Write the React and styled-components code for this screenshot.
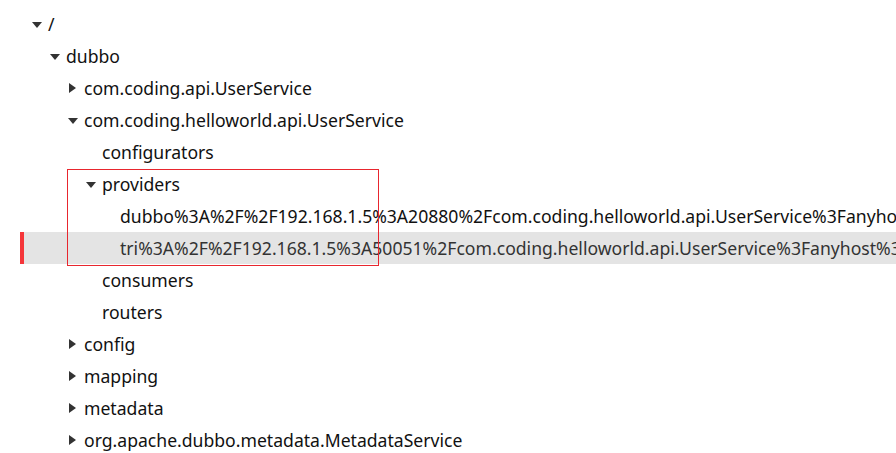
import styled, { createGlobalStyle } from "styled-components";

const GlobalStyle = createGlobalStyle`
  html, body {
    margin: 0;
    padding: 0;
    background: #ffffff;
  }
  body {
    font-family: "Noto Sans", "Open Sans", "Liberation Sans", sans-serif;
    overflow: hidden;
  }
`;

const tree = [
  { label: "/", open: true, children: [
    { label: "dubbo", open: true, children: [
      { label: "com.coding.api.UserService", children: [] },
      { label: "com.coding.helloworld.api.UserService", open: true, children: [
        { label: "configurators" },
        { label: "providers", open: true, children: [
          { label: "dubbo%3A%2F%2F192.168.1.5%3A20880%2Fcom.coding.helloworld.api.UserService%3Fanyhost%3Dtrue" },
          { label: "tri%3A%2F%2F192.168.1.5%3A50051%2Fcom.coding.helloworld.api.UserService%3Fanyhost%3Dtrue", selected: true },
        ] },
        { label: "consumers" },
        { label: "routers" },
      ] },
      { label: "config", children: [] },
      { label: "mapping", children: [] },
      { label: "metadata", children: [] },
      { label: "org.apache.dubbo.metadata.MetadataService", children: [] },
    ] },
  ] },
];

const Page = styled.div`
  padding-top: 8px;
  width: 896px;
  height: 453px;
  box-sizing: border-box;
  overflow: hidden;
`;

const Tree = styled.div`
  position: relative;
  display: flex;
  flex-direction: column;
`;

const Row = styled.div`
  display: flex;
  align-items: center;
  height: 32px;
  margin-left: 20px;
  padding-left: ${(p) => 8 + p.$level * 18}px;
  white-space: nowrap;
  overflow: hidden;
  font-size: 17.6px;
  color: ${(p) => (p.$selected ? "#333333" : "#111111")};
  background: ${(p) => (p.$selected ? "#e4e4e4" : "transparent")};
  border-left: 4px solid ${(p) => (p.$selected ? "#f5363a" : "transparent")};
`;

const Toggle = styled.span`
  flex: 0 0 16px;
  display: flex;
  align-items: center;
  height: 100%;

  &::before {
    content: "";
    display: ${(p) => (p.$kind === "leaf" ? "none" : "block")};
    width: 0;
    height: 0;
    ${(p) =>
      p.$kind === "open"
        ? `border-left: 5px solid transparent;
           border-right: 5px solid transparent;
           border-top: 6px solid #333;
           margin-top: 1px;`
        : `border-top: 5px solid transparent;
           border-bottom: 5px solid transparent;
           border-left: 7px solid #333;
           margin-left: 1px;`}
  }
`;

const Label = styled.span`
  line-height: 32px;
`;

const Annotation = styled.div`
  position: absolute;
  left: 67px;
  top: 161px;
  width: 310px;
  height: 95px;
  border: 1px solid #e8262e;
  pointer-events: none;
`;

function flatten(nodes, level, out) {
  nodes.forEach((n) => {
    out.push({ ...n, level });
    if (n.open && n.children) flatten(n.children, level + 1, out);
  });
  return out;
}

export default function App() {
  const rows = flatten(tree, 0, []);
  return (
    <Page>
      <GlobalStyle />
      <Tree>
        {rows.map((r, i) => (
          <Row key={i} $level={r.level} $selected={r.selected}>
            <Toggle $kind={r.children ? (r.open ? "open" : "closed") : "leaf"} />
            <Label>{r.label}</Label>
          </Row>
        ))}
        <Annotation />
      </Tree>
    </Page>
  );
}
